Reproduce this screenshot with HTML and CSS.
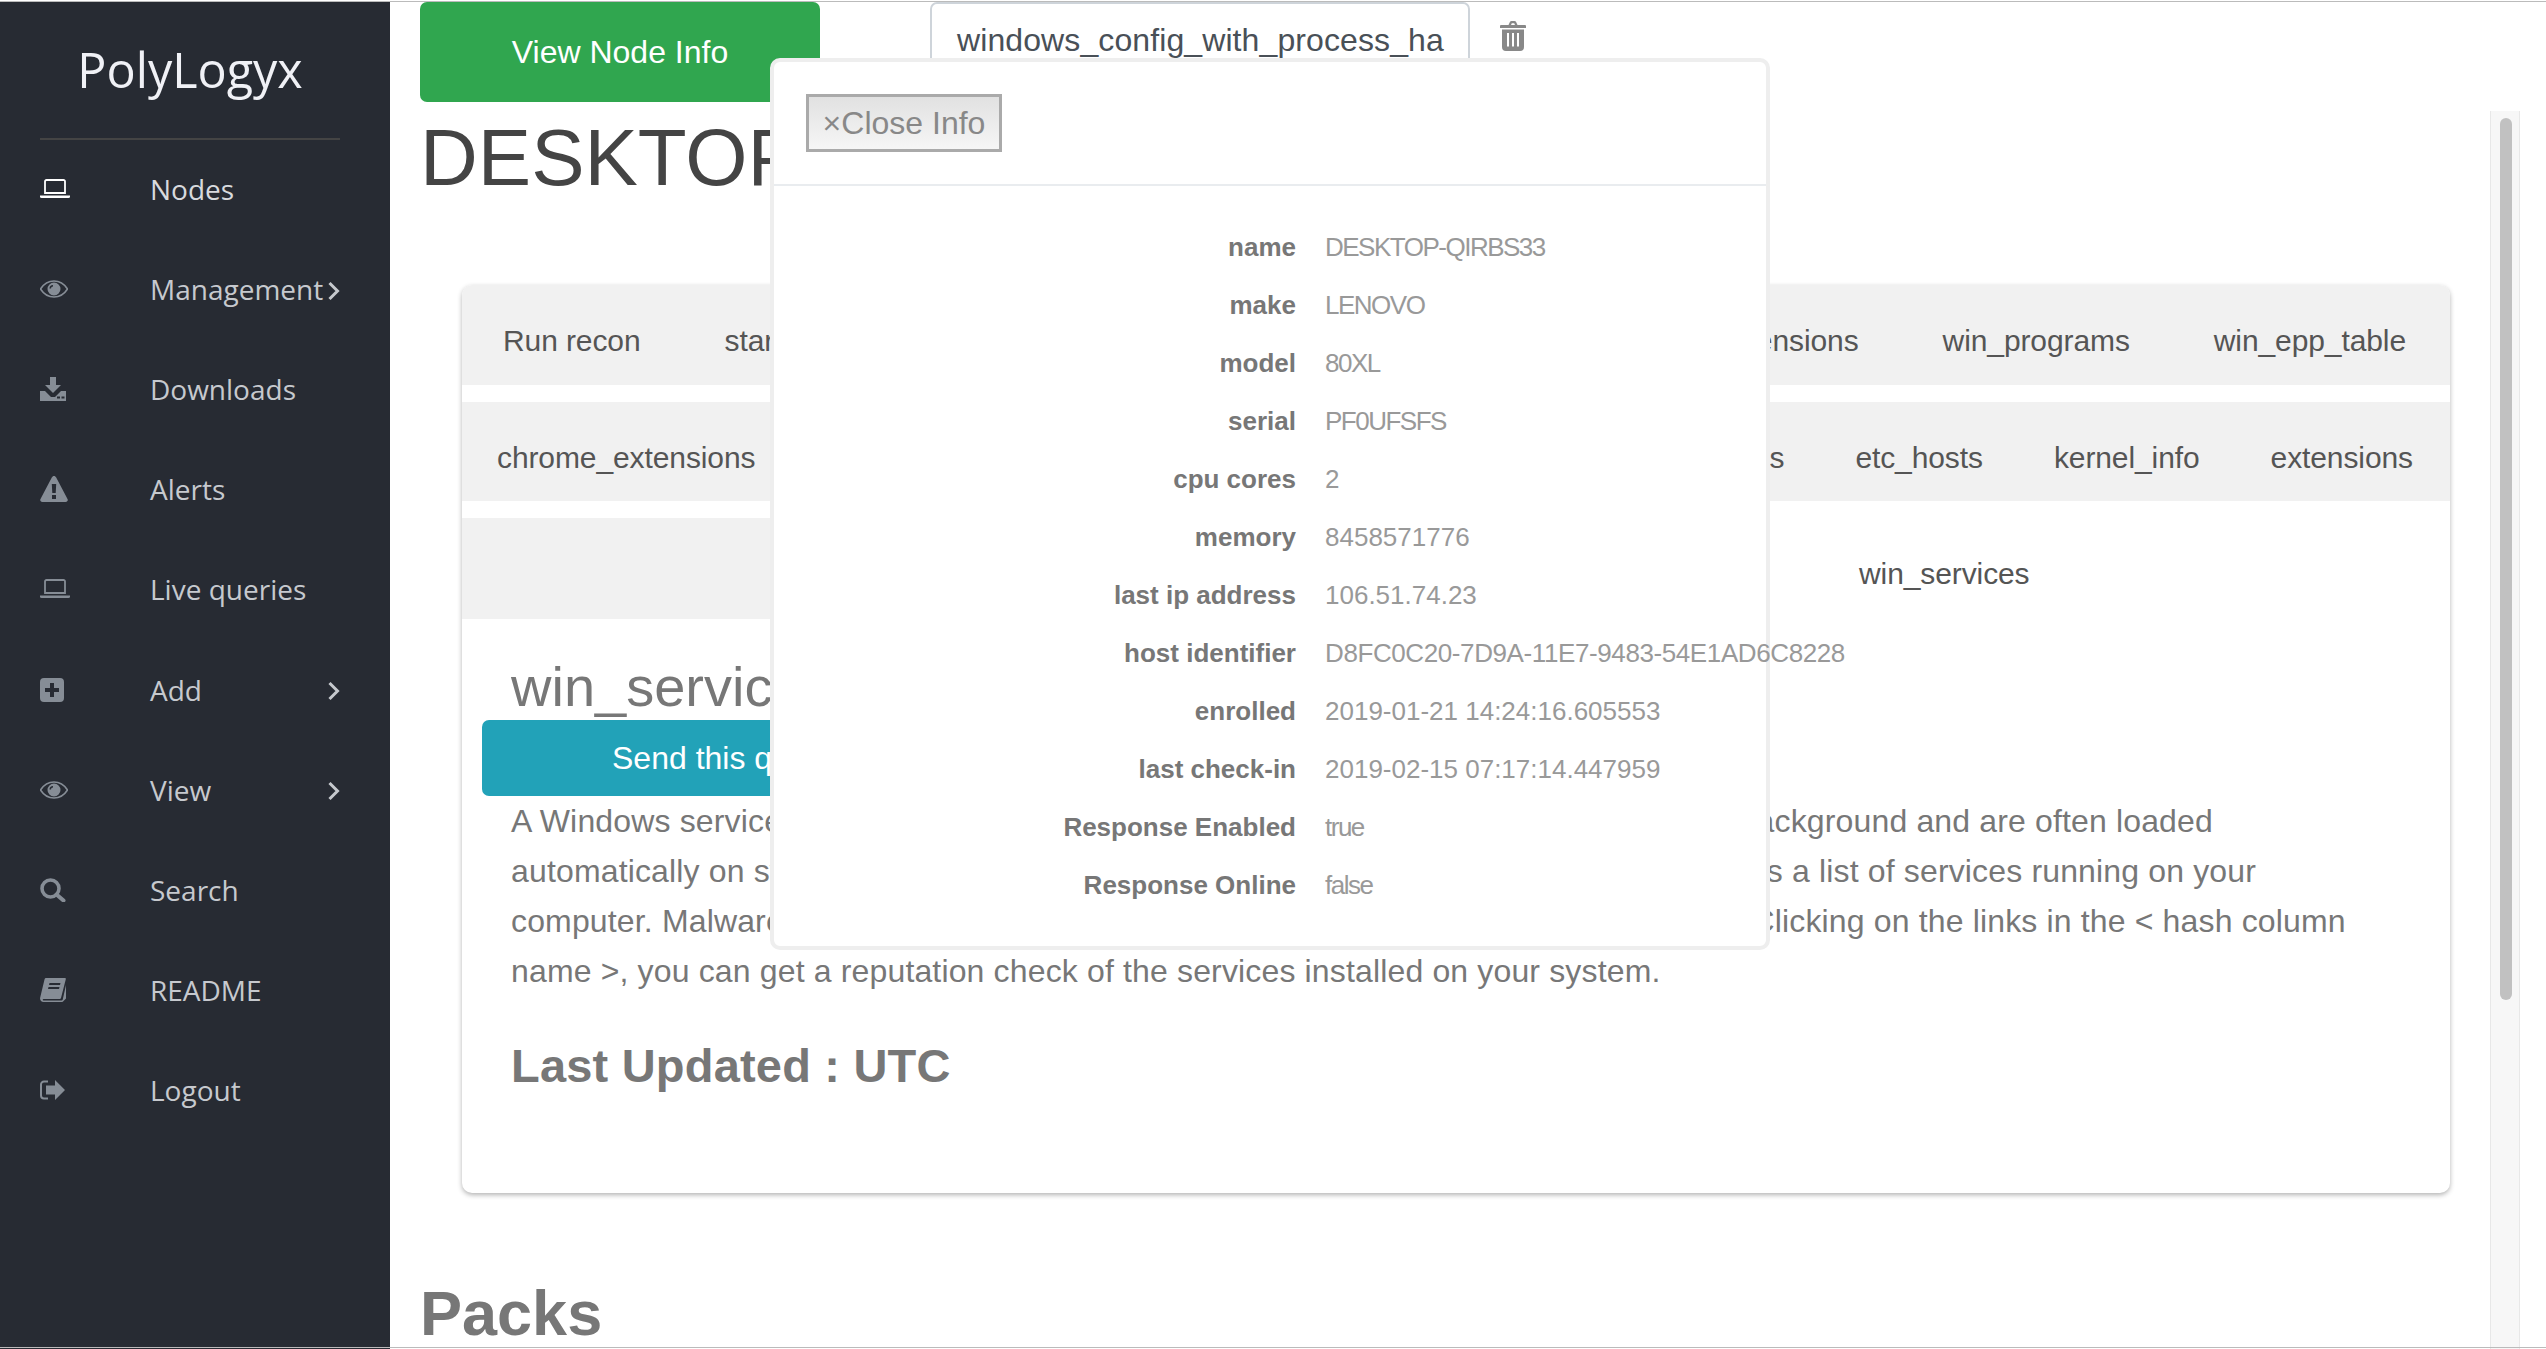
FILE: index.html
```html
<!DOCTYPE html>
<html lang="en">
<head>
  <meta charset="UTF-8">
  <title>PolyLogyx</title>
  <link rel="stylesheet" href="styles.css">
</head>
<body>
  <svg class="icon-defs" width="0" height="0">
    <symbol id="i-laptop" viewBox="0 0 30 20">
      <path d="M5 2.500A1.500 1.500 0 0 1 6.500 1h17A1.500 1.500 0 0 1 25 2.500V14H5Z" fill="none" stroke="currentColor" stroke-width="1.800"/>
      <path d="M0 16.500h30v1A1.500 1.500 0 0 1 28.500 19H1.500A1.500 1.500 0 0 1 0 17.500Z" fill="currentColor"/>
    </symbol>
    <symbol id="i-eye" viewBox="0 0 28 18">
      <path d="M0.500 9C4 3.500 8.500 1 14 1s10 2.500 13.500 8C24 14.500 19.500 17 14 17S4 14.500 0.500 9Z" fill="none" stroke="currentColor" stroke-width="1.600"/>
      <path fill-rule="evenodd" d="M14 2.500a6.500 6.500 0 1 1 0 13 6.500 6.500 0 0 1 0-13ZM13 5a3.500 3.500 0 0 0-3.500 3.500h1.500A2 2 0 0 1 13 6.500Z" fill="currentColor"/>
    </symbol>
  </svg>

  <aside class="sidebar">
    <div class="logo">PolyLogyx</div>
    <nav class="nav">
      <a class="nav-item nav-item-active"><span class="nav-icon"><svg width="30" height="20"><use href="#i-laptop"/></svg></span><span class="nav-label">Nodes</span></a>
      <a class="nav-item"><span class="nav-icon"><svg width="28" height="18"><use href="#i-eye"/></svg></span><span class="nav-label">Management</span><svg class="chevron" width="12" height="20" viewBox="0 0 12 20"><path d="M1.500 2l8 8-8 8" fill="none" stroke="currentColor" stroke-width="3"/></svg></a>
      <a class="nav-item"><span class="nav-icon"><svg width="26" height="24" viewBox="0 0 26 24"><path fill-rule="evenodd" d="M10 0h6v8h5l-8 8-8-8h5ZM0 14h5l6 6h4l6-6h5v10H0ZM17 19.500h3v2h-3ZM21.500 19.500h3v2h-3Z" fill="currentColor"/></svg></span><span class="nav-label">Downloads</span></a>
      <a class="nav-item"><span class="nav-icon"><svg width="28" height="26" viewBox="0 0 28 26"><path fill-rule="evenodd" d="M14 0c1 0 1.700.600 2.200 1.500l11.300 21.500c.800 1.500-.200 3-1.800 3H2.300C.700 26-.300 24.500.500 23L11.800 1.500C12.300.600 13 0 14 0ZM11.800 8l.500 9h3.400l.500-9ZM12 19v4h4v-4Z" fill="currentColor"/></svg></span><span class="nav-label">Alerts</span></a>
      <a class="nav-item"><span class="nav-icon"><svg width="30" height="20"><use href="#i-laptop"/></svg></span><span class="nav-label">Live queries</span></a>
      <a class="nav-item"><span class="nav-icon"><svg width="24" height="24" viewBox="0 0 24 24"><path fill-rule="evenodd" d="M4 0h16a4 4 0 0 1 4 4v16a4 4 0 0 1-4 4H4a4 4 0 0 1-4-4V4a4 4 0 0 1 4-4ZM10 5v5H5v4h5v5h4v-5h5v-4h-5V5Z" fill="currentColor"/></svg></span><span class="nav-label">Add</span><svg class="chevron" width="12" height="20" viewBox="0 0 12 20"><path d="M1.500 2l8 8-8 8" fill="none" stroke="currentColor" stroke-width="3"/></svg></a>
      <a class="nav-item"><span class="nav-icon"><svg width="28" height="18"><use href="#i-eye"/></svg></span><span class="nav-label">View</span><svg class="chevron" width="12" height="20" viewBox="0 0 12 20"><path d="M1.500 2l8 8-8 8" fill="none" stroke="currentColor" stroke-width="3"/></svg></a>
      <a class="nav-item"><span class="nav-icon"><svg width="26" height="24" viewBox="0 0 26 24"><circle cx="10.500" cy="10.500" r="8.500" fill="none" stroke="currentColor" stroke-width="3.600"/><path d="M16.500 16.500l7 6" fill="none" stroke="currentColor" stroke-width="4" stroke-linecap="round"/></svg></span><span class="nav-label">Search</span></a>
      <a class="nav-item"><span class="nav-icon"><svg width="26" height="24" viewBox="0 0 26 24"><path fill-rule="evenodd" d="M6 0h19c.800 0 1 .600.800 1.200L21 20c-.300.800-.800 1-1.600 1H4c-1 0-1.500.600-1.200 1.100.200.400.700.500 1.200.500h17.500c.600 0 1-.300 1.200-.800L26 7v13.500l-2.500 2.500c-.300.600-.900 1-1.700 1H3.500C1.200 24-.500 22 .200 19.500L4.500 1.500C4.800.500 5.200 0 6 0ZM9.500 5l-.500 2h11l.500-2ZM8.500 9l-.500 2h11l.500-2Z" fill="currentColor"/></svg></span><span class="nav-label">README</span></a>
      <a class="nav-item"><span class="nav-icon"><svg width="25" height="20" viewBox="0 0 25 20"><path d="M8 1.500H4A3 3 0 0 0 1 4.500v11a3 3 0 0 0 3 3h4" fill="none" stroke="currentColor" stroke-width="2"/><path d="M15 0l10 10-10 10v-5.500H6v-9h9Z" fill="currentColor"/></svg></span><span class="nav-label">Logout</span></a>
    </nav>
  </aside>

  <main class="main">
    <div class="top-bar">
      <button class="btn btn-green">View Node Info</button>
      <div class="config-select">windows_config_with_process_ha</div>
      <svg class="trash" width="26" height="30" viewBox="0 0 26 30"><path fill-rule="evenodd" d="M8.500 4l1.500-3.200C10.300.300 10.800 0 11.500 0h3c.700 0 1.200.300 1.500.800L17.500 4H25a1 1 0 0 1 1 1v2H0V5a1 1 0 0 1 1-1ZM11 4h4l-.800-1.700h-2.400ZM2 8.500h22V26a4 4 0 0 1-4 4H6a4 4 0 0 1-4-4ZM7 12v13.500h2V12ZM12 12v13.500h2V12ZM17 12v13.500h2V12Z" fill="currentColor"/></svg>
    </div>

    <h1 class="node-title">DESKTOP-QIRBS33</h1>

    <section class="card">
      <div class="tab-row tab-row-one">
        <div class="tab-group tab-group-one"><span>Run recon</span><span>startup_items</span></div>
        <div class="tab-group tab-group-one"><span>ie_extensions</span><span>win_programs</span><span>win_epp_table</span></div>
      </div>
      <div class="tab-row tab-row-two">
        <div class="tab-group tab-group-two"><span>chrome_extensions</span><span>certificates</span></div>
        <div class="tab-group tab-group-two"><span>win_drivers</span><span>etc_hosts</span><span>kernel_info</span><span>extensions</span></div>
      </div>
      <div class="tab-row-three">
        <div class="tab-filler"></div>
        <div class="tab-active">win_services</div>
      </div>

      <div class="card-body">
        <h2 class="query-title">win_services</h2>
        <button class="btn btn-teal">Send this query to all the nodes</button>
        <p class="query-text">A Windows service is a long-running executable that performs actions and runs in the background and are often loaded<br>automatically on system startup. Running this query on your Windows computer provides a list of services running on your<br>computer. Malware often installs itself as a service to remain persistent on the system. Clicking on the links in the &lt; hash column<br>name &gt;, you can get a reputation check of the services installed on your system.</p>
        <h3 class="last-updated">Last Updated : UTC</h3>
      </div>
    </section>

    <h2 class="packs-title">Packs</h2>
  </main>

  <div class="scroll-track"><div class="scroll-thumb"></div></div>

  <div class="info-modal">
    <div class="info-header">
      <button class="close-btn">×Close Info</button>
    </div>
    <div class="info-body">
      <div class="info-label">name</div><div class="info-value">DESKTOP-QIRBS33</div>
      <div class="info-label">make</div><div class="info-value">LENOVO</div>
      <div class="info-label">model</div><div class="info-value">80XL</div>
      <div class="info-label">serial</div><div class="info-value">PF0UFSFS</div>
      <div class="info-label">cpu cores</div><div class="info-value">2</div>
      <div class="info-label">memory</div><div class="info-value info-value-num">8458571776</div>
      <div class="info-label">last ip address</div><div class="info-value info-value-num">106.51.74.23</div>
      <div class="info-label">host identifier</div><div class="info-value info-value-hex">D8FC0C20-7D9A-11E7-9483-54E1AD6C8228</div>
      <div class="info-label">enrolled</div><div class="info-value info-value-num">2019-01-21 14:24:16.605553</div>
      <div class="info-label">last check-in</div><div class="info-value info-value-num">2019-02-15 07:17:14.447959</div>
      <div class="info-label">Response Enabled</div><div class="info-value">true</div>
      <div class="info-label">Response Online</div><div class="info-value">false</div>
    </div>
  </div>
</body>
</html>
```

FILE: styles.css
```css
* {
  margin: 0;
  padding: 0;
  box-sizing: border-box;
}

html, body {
  height: 100%;
  overflow: hidden;
}

body {
  display: flex;
  position: relative;
  background-color: white;
  border-top: 1px solid #bbb;
  margin-top: 1px;
  font-family: "Liberation Sans", Arial, sans-serif;
}

body::after {
  content: "";
  position: absolute;
  left: 0;
  right: 0;
  bottom: 2px;
  height: 1px;
  background-color: #bbb;
}

.icon-defs {
  position: absolute;
}

/* sidebar */
.sidebar {
  flex: 0 0 390px;
  background-color: #272b33;
  font-family: "Open Sans", sans-serif;
}

.logo {
  height: 138px;
  margin: 0 50px 0 40px;
  padding-top: 34px;
  border-bottom: 2px solid #444;
  font-size: 48.5px;
  line-height: 66px;
  text-align: center;
  color: #f0f1f6;
}

.nav {
  margin-top: -1px;
}

.nav-item {
  display: flex;
  align-items: center;
  width: 340px;
  height: 100.1px;
  padding-left: 40px;
  color: #c6c9ce;
  font-size: 28px;
}

.nav-item-active {
  color: #d8dade;
}

.nav-item-active .nav-icon {
  color: white;
}

.nav-icon {
  display: flex;
  align-items: center;
  flex: 0 0 110px;
  color: #868d96;
}

.nav-label {
  flex: 1;
  white-space: nowrap;
}

.chevron {
  flex: none;
  margin-top: 3px;
}

/* main column */
.main {
  flex: 1;
  padding-left: 30px;
}

.top-bar {
  display: flex;
  align-items: flex-start;
}

.btn {
  display: block;
  border: none;
  color: white;
  font-family: inherit;
  font-size: 32px;
  white-space: nowrap;
}

.btn-green {
  width: 400px;
  height: 100px;
  background-color: #30a64f;
  border-radius: 7px;
}

.config-select {
  width: 540px;
  height: 90px;
  margin-left: 110px;
  padding: 17px 0 0 25px;
  border: 2px solid #ced4da;
  border-radius: 7px;
  color: #495057;
  font-size: 32px;
  letter-spacing: 0.1px;
  line-height: 38px;
  white-space: nowrap;
  overflow: hidden;
}

.trash {
  margin: 19px 0 0 30px;
  color: #888;
}

.node-title {
  margin: 8px 0 0 0;
  font-size: 80px;
  font-weight: normal;
  line-height: 96px;
  color: #444;
}

.card {
  width: 1988px;
  margin: 79px 0 0 42px;
  padding-bottom: 98px;
  border-radius: 10px;
  background-color: white;
  box-shadow: 0 2px 5px rgba(0,0,0,0.3);
  overflow: hidden;
}

.tab-row {
  display: flex;
  justify-content: space-between;
  align-items: center;
  background-color: #f1f1f1;
  color: #555;
  font-size: 30px;
  letter-spacing: -0.1px;
  white-space: nowrap;
}

.tab-row-one {
  height: 100px;
  padding: 12px 44px 0 41px;
}

.tab-row-two {
  height: 99px;
  margin-top: 17px;
  padding: 12px 37px 0 35px;
}

.tab-group {
  display: flex;
}

.tab-group-one {
  gap: 84px;
}

.tab-group-two {
  gap: 71px;
}

.tab-row-three {
  display: flex;
  height: 101px;
  margin-top: 17px;
}

.tab-filler {
  width: 1308px;
  background-color: #f1f1f1;
}

.tab-active {
  padding-left: 89px;
  color: #555;
  font-size: 30px;
  letter-spacing: -0.1px;
  line-height: 112px;
}

.card-body {
  padding: 35px 0 0 49px;
}

.query-title {
  font-size: 56px;
  font-weight: normal;
  line-height: 66px;
  color: #777;
}

.btn-teal {
  width: 1100px;
  height: 76px;
  margin-left: -29px;
  padding-left: 130px;
  background-color: #22a2b8;
  border-radius: 7px;
  text-align: left;
}

.query-text {
  font-size: 32px;
  letter-spacing: 0.15px;
  line-height: 50px;
  color: #777;
  white-space: nowrap;
}

.last-updated {
  margin-top: 41px;
  font-size: 47px;
  letter-spacing: 0.2px;
  line-height: 58px;
  color: #777;
}

.packs-title {
  margin-top: 83px;
  font-size: 63px;
  line-height: 74px;
  color: #777;
}

/* page scrollbar, sits over the content */
.scroll-track {
  position: absolute;
  top: 109px;
  bottom: 0;
  left: 2490px;
  width: 30px;
  padding: 7px 7px 0 9px;
  background-color: #f7f7f7;
  border-left: 1px solid #e8e8e8;
  border-right: 1px solid #e8e8e8;
}

.scroll-thumb {
  height: 882px;
  background-color: #c1c1c1;
  border-radius: 8px;
}

/* node info popup */
.info-modal {
  position: absolute;
  top: 56px;
  left: 770px;
  width: 1000px;
  height: 892px;
  background-color: white;
  border: 4px solid #eee;
  border-radius: 10px;
}

.info-header {
  height: 124px;
  padding: 32px 32px;
  border-bottom: 2px solid #e9ecef;
}

.close-btn {
  display: block;
  width: 196px;
  height: 58px;
  background: linear-gradient(#e1e1e1, #f6f6f6);
  border: 3px solid #aaa;
  color: #888;
  font-family: inherit;
  font-size: 32px;
  line-height: 50px;
}

.info-body {
  display: grid;
  grid-template-columns: 522px 1fr;
  column-gap: 29px;
  grid-auto-rows: 58px;
  align-items: center;
  padding-top: 32px;
  font-size: 26px;
  white-space: nowrap;
}

.info-label {
  font-weight: bold;
  text-align: right;
  color: #777;
}

.info-value {
  color: #999;
  letter-spacing: -1.5px;
}

.info-value-num {
  letter-spacing: 0;
}

.info-value-hex {
  letter-spacing: -0.4px;
}
```
